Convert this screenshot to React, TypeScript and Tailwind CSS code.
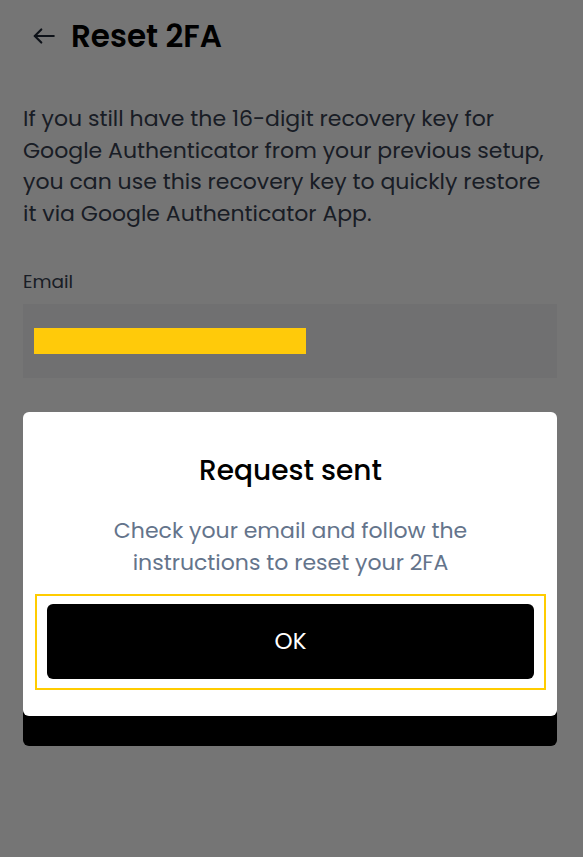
import React from 'react';

const font = { fontFamily: '"Poppins", Inter, "Noto Sans", sans-serif' };

function ResetPage() {
  return (
    <div className="min-h-[857px] bg-white pl-[23px] pr-[26px] pt-[18px]" style={font}>
      <div className="flex items-center gap-[14px] h-[36px]">
        <svg width="26" height="26" viewBox="0 0 24 24" fill="none" stroke="#1f2937" strokeWidth="2" strokeLinecap="round" strokeLinejoin="round" className="ml-[8px]">
          <path d="M21 12H3.5" />
          <path d="M9.5 6l-6 6 6 6" />
        </svg>
        <h1 className="text-[31px] font-semibold text-black leading-[36px]">Reset 2FA</h1>
      </div>

      <p className="mt-[49px] text-[22px] leading-[31.7px] text-[#374151]">
        If you still have the 16-digit recovery key for Google Authenticator from your previous setup, you can use this recovery key to quickly restore it via Google Authenticator App.
      </p>

      <label className="block mt-[39px] text-[18.5px] leading-[26px] text-[#374151]">Email</label>
      <div className="mt-[9px] h-[74px] bg-[#f5f5f7] flex items-center px-[11px]">
        <div className="relative z-20 h-[26px] w-[272px] bg-[#ffca0a]" />
      </div>

      <button className="mt-[294px] w-full h-[74px] rounded-[6px] bg-black text-white text-[22px] font-medium">
        Submit
      </button>
    </div>
  );
}

function RequestSentDialog() {
  return (
    <div className="fixed inset-0 z-10 bg-black/[0.54] flex flex-col items-stretch pt-[412px] pl-[23px] pr-[26px]" style={font}>
      <div className="bg-white rounded-[6px] pl-[12px] pr-[11px] pt-[41px] pb-[26px] flex flex-col items-center">
        <h2 className="text-[28px] leading-[36px] font-medium text-black">Request sent</h2>
        <p className="mt-[26px] text-[22px] leading-[32px] text-[#64748b] text-center max-w-[400px]">
          Check your email and follow the instructions to reset your 2FA
        </p>
        <div className="mt-[15px] w-full border-2 border-[#ffcc00] px-[10px] pt-[8px] pb-[9px]">
          <button className="w-full h-[75px] rounded-[6px] bg-black text-white text-[23px] font-normal">
            OK
          </button>
        </div>
      </div>
    </div>
  );
}

export default function App() {
  return (
    <div className="relative w-full min-h-[857px]">
      <ResetPage />
      <RequestSentDialog />
    </div>
  );
}
